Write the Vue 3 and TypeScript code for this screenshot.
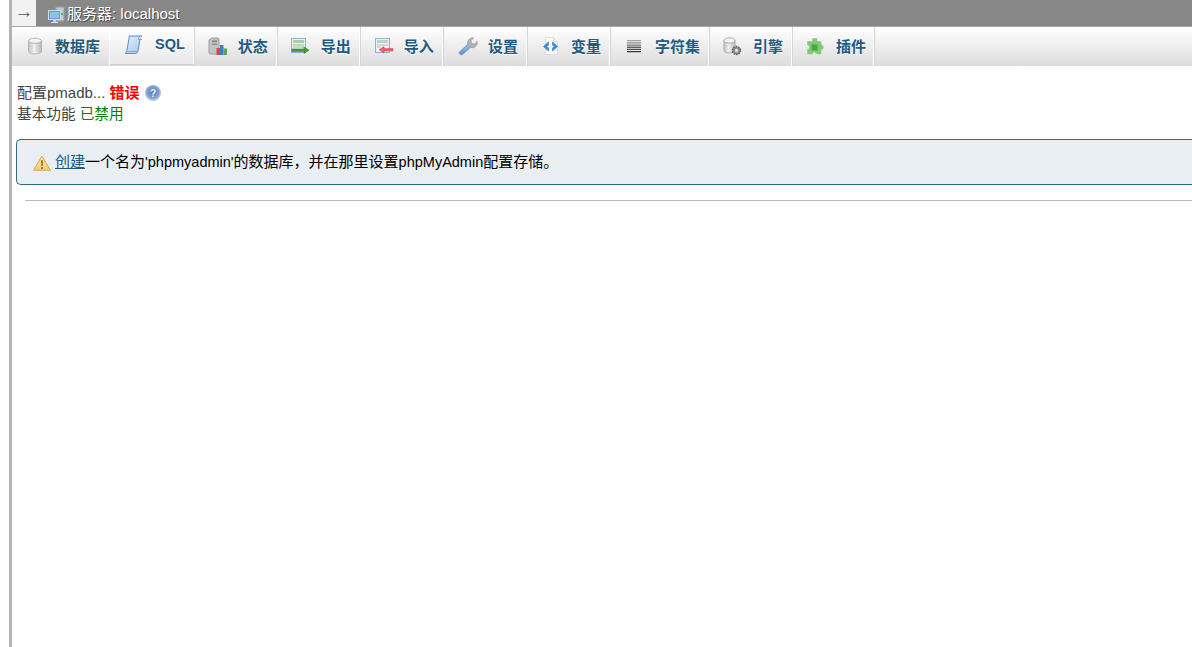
<script setup lang="ts">
const tabs = [
  { label: '数据库', icon: 'db' },
  { label: 'SQL', icon: 'sql' },
  { label: '状态', icon: 'status' },
  { label: '导出', icon: 'export' },
  { label: '导入', icon: 'import' },
  { label: '设置', icon: 'wrench' },
  { label: '变量', icon: 'vars' },
  { label: '字符集', icon: 'charset' },
  { label: '引擎', icon: 'engine' },
  { label: '插件', icon: 'plugin' },
];
</script>

<template>
  <div class="page">
    <svg class="defs" width="0" height="0">
      <defs>
        <linearGradient id="cyl" x1="0" x2="1" y1="0" y2="0">
          <stop offset="0" stop-color="#c4c4c2" />
          <stop offset=".45" stop-color="#f0f0ee" />
          <stop offset="1" stop-color="#b6b6b4" />
        </linearGradient>
        <linearGradient id="scroll" x1="0" x2="1" y1="0" y2="1">
          <stop offset="0" stop-color="#e6f0fb" />
          <stop offset="1" stop-color="#a3c4ea" />
        </linearGradient>
        <linearGradient id="blue" x1="0" x2="0" y1="0" y2="1">
          <stop offset="0" stop-color="#a6c3e6" />
          <stop offset="1" stop-color="#5f8fd0" />
        </linearGradient>
        <linearGradient id="lines" gradientUnits="userSpaceOnUse" x1="0" x2="0" y1="3" y2="15">
          <stop offset="0" stop-color="#a8a8a8" />
          <stop offset="1" stop-color="#333" />
        </linearGradient>
        <linearGradient id="warnfill" x1="0" x2="0" y1="0" y2="1">
          <stop offset="0" stop-color="#fdf0b8" />
          <stop offset="1" stop-color="#f5c964" />
        </linearGradient>
        <radialGradient id="helpfill" cx=".5" cy=".45" r=".55">
          <stop offset="0" stop-color="#4f7cb8" />
          <stop offset=".65" stop-color="#7da2d0" />
          <stop offset="1" stop-color="#c6d5e8" />
        </radialGradient>
      </defs>
    </svg>

    <div class="serverbar">
      <span class="toggle">→</span>
      <svg class="srv-icon" width="18" height="18" viewBox="0 0 18 18">
        <rect x="8" y="1" width="8" height="14" fill="#c6c9cc" stroke="#9a9ea2" />
        <rect x="13" y="7" width="2" height="2" fill="#58b058" />
        <rect x=".5" y="4.500" width="12" height="9" fill="#5da0dc" stroke="#cfd6dc" />
        <rect x="2" y="6" width="9" height="6" fill="#8cc0ea" />
        <rect x="5" y="14" width="3" height="2" fill="#c9cdd1" />
        <rect x="3" y="16" width="7" height="1" fill="#dfe2e4" />
      </svg>
      <span class="srv-text">服务器: localhost</span>
    </div>

    <nav class="tabs">
      <a v-for="t in tabs" :key="t.label" class="tab" :class="{ active: t.icon === 'sql' }">
        <svg class="ic" width="20" height="20" viewBox="0 0 20 20">
          <template v-if="t.icon === 'db'">
            <path d="M3.500 3.500v11c0 1.400 2.900 2.500 6.500 2.500s6.500-1.100 6.500-2.500v-11z" fill="url(#cyl)" stroke="#b4b4b2" />
            <ellipse cx="10" cy="3.800" rx="6.500" ry="2.500" fill="#f4f4f2" stroke="#b4b4b2" />
          </template>
          <template v-else-if="t.icon === 'sql'">
            <path d="M5 1h13c-1.500.6-1.700 2-2 3.500l-2 11c-.3 1.600-1 3-2.500 3H1c1.300-.5 1.600-1.500 1.900-3L4.900 4c.2-1 .3-2 .1-3z" fill="url(#scroll)" stroke="#5b8dc6" />
            <path d="M16.500 1c-1.500.5-2 2-1.800 3.500H18" fill="#cfe0f3" stroke="#5b8dc6" stroke-width=".7" />
            <path d="M13.500 16.500H3" stroke="#5b8dc6" stroke-width=".6" fill="none" />
          </template>
          <template v-else-if="t.icon === 'status'">
            <path d="M1 3l3-2h6l1 1v15H3c-1 0-2-.5-2-1.500z" fill="#c4c4c4" stroke="#9a9a9a" />
            <rect x="4" y="3.500" width="5" height="1.500" fill="#7e7e7e" />
            <rect x="4" y="6.500" width="5" height="1.500" fill="#8e8e8e" />
            <rect x="8.500" y="11" width="3.500" height="7" fill="#d8483e" />
            <rect x="12" y="8" width="3.500" height="10" fill="#3f78cc" />
            <rect x="15.500" y="11.500" width="3.500" height="6.500" fill="#4fae4a" />
          </template>
          <template v-else-if="t.icon === 'export'">
            <rect x=".5" y="1.500" width="14" height="14" fill="#e8f0e8" stroke="#8fb0d4" />
            <rect x="2" y="3" width="11" height="3" fill="#a8d0a8" />
            <path d="M2 8h11M2 10h11" stroke="#9cc49c" />
            <path d="M1 12h12v-2l5 3.200-5 3.300v-2H1z" fill="#3f9a3f" stroke="#2f7a2f" stroke-width=".5" />
          </template>
          <template v-else-if="t.icon === 'import'">
            <rect x="1.500" y="1.500" width="14" height="14" fill="#eef0f4" stroke="#8fb0d4" />
            <rect x="3" y="3" width="11" height="3" fill="#bcd8bc" />
            <path d="M3 8h11M3 10h3" stroke="#a8c8a8" />
            <path d="M19 11.500H10v-2l-5 3.200 5 3.300v-2h9z" fill="#ee6264" stroke="#cf4444" stroke-width=".5" />
          </template>
          <template v-else-if="t.icon === 'wrench'">
            <path d="M1.500 15 10 7l3 3-8.500 7.500c-1.500 1.200-4.200-1-3-2.500z" fill="url(#blue)" stroke="#5f8ac0" stroke-width=".7" />
            <path d="M9.700 7.300c-.7-3 1-6 5-6.600l1 .3-2.700 2.700.7 2.700 2.800.7 2.700-2.700c.6 4-2.800 7.300-6.400 6.100z" fill="#b3b3b3" stroke="#8c8c8c" stroke-width=".6" />
          </template>
          <template v-else-if="t.icon === 'vars'">
            <path d="M4.500 .5h8l4 4v13h-12z" fill="#fbfbfb" stroke="#dcdcdc" />
            <path d="M12.500 .5v4h4" fill="#eee" stroke="#dcdcdc" />
            <path d="M7.500 5 2.500 9.500l5 4.500v-3L6 9.500 7.500 8z" fill="#3c8bdc" stroke="#3c8bdc" stroke-width=".8" stroke-linejoin="round" />
            <path d="M11.500 5l5 4.500-5 4.500v-3L13 9.500 11.500 8z" fill="#3c8bdc" stroke="#3c8bdc" stroke-width=".8" stroke-linejoin="round" />
          </template>
          <template v-else-if="t.icon === 'charset'">
            <path d="M2 3h14v1.300H2zM2 5.200h14v1.300H2zM2 7.400h14v1.300H2zM2 9.600h14v1.300H2zM2 11.800h14v1.300H2zM2 14h14v1.300H2z" fill="url(#lines)" />
          </template>
          <template v-else-if="t.icon === 'engine'">
            <path d="M1 3.500v10c0 1.300 2.500 2.500 5.500 2.500s5.500-1.200 5.500-2.500v-10z" fill="url(#cyl)" stroke="#aaa" />
            <ellipse cx="6.500" cy="3.500" rx="5.500" ry="2.700" fill="#f4f4f4" stroke="#aaa" />
            <circle cx="13.500" cy="13.500" r="4" fill="#8a8a8a" stroke="#666" stroke-width="1.500" stroke-dasharray="1.500 1" />
            <circle cx="13.500" cy="13.500" r="1.700" fill="#e4e4e4" />
          </template>
          <template v-else>
            <path d="M6.500 1.500h4.500v3h4v3.500c3-.8 3 5.500 0 4.500v4.500h-4.500c.5-2.200-4.500-2.200-4 0H1.500v-4.500c2.500.4 2.500-5 0-4.500V4.500h5z" fill="#83c878" stroke="#93d086" stroke-width=".7" />
            <rect x="5.500" y="7.500" width="6" height="6" fill="#46a846" />
          </template>
        </svg>
        <span class="tab-text">{{ t.label }}</span>
      </a>
    </nav>

    <div class="content">
      <div class="status-line">配置pmadb... <strong class="err">错误</strong>
        <svg class="help" width="16" height="16" viewBox="0 0 16 16">
          <circle cx="8" cy="8" r="8" fill="url(#helpfill)" />
          <text x="8" y="12" text-anchor="middle" font-size="10" font-weight="700" fill="#e8eef6" font-family="Liberation Sans">?</text>
        </svg>
      </div>
      <div class="status-line second">基本功能 <span class="off">已禁用</span></div>

      <div class="notice">
        <svg class="warn" width="18" height="16" viewBox="0 0 18 16">
          <path d="M9 1 17.500 15.300H.5z" fill="url(#warnfill)" stroke="#dca858" stroke-linejoin="round" />
          <path d="M7.800 5.200h2.400L9.700 11H8.300z" fill="#a87b2c" />
          <rect x="8" y="12" width="2" height="2" fill="#a87b2c" />
        </svg>
        <span><a class="link">创建</a>一个名为<span class="latin">'phpmyadmin'</span>的数据库，并在那里设置<span class="latin">phpMyAdmin</span>配置存储。</span>
      </div>

      <hr class="rule" />
    </div>
  </div>
</template>

<style>
html, body { margin: 0; background: #fff; overflow: hidden; }
</style>

<style scoped>
.page {
  height: 647px;
  margin-left: 9px;
  border-left: 3px solid #b4b4b4;
  font-family: "Liberation Sans", "Noto Sans CJK SC", sans-serif;
  font-size: 15px;
  color: #444;
  overflow: hidden;
}
.defs { display: block; height: 0; }
.serverbar {
  height: 26px;
  background: #888;
  border-bottom: 1px solid #a6a6a6;
  display: flex;
  align-items: center;
  color: #fff;
}
.toggle {
  width: 24px;
  height: 26px;
  background: #f2f2f2;
  color: #555;
  font-size: 19px;
  text-align: center;
  line-height: 24px;
}
.srv-icon { margin-left: 12px; margin-top: 4px; }
.srv-text { margin: -2px 0 0 1px; text-shadow: 1px 1px 1px #444; }
.tabs {
  height: 39px;
  display: flex;
  background: linear-gradient(#fff, #dcdcdc);
}
.tab {
  display: flex;
  align-items: center;
  padding: 0 8px 0 14px;
  border-right: 1px solid #fff;
  box-shadow: 1px 0 0 #d5d5d5;
  color: #235a81;
  font-weight: 700;
  text-shadow: 0 1px 0 #fff;
}
.tab:first-child { padding: 0 9px 0 13px; }
.tab:nth-child(6), .tab:nth-child(8) { padding-left: 15px; }
.tab:last-child { padding-right: 7px; }
.tab.active {
  height: 36px;
  padding: 0 8px 1px 14px;
  background: linear-gradient(#fff, #e8e8e8);
  border-bottom: 1px solid #ccc;
  font-size: 14.5px;
}
.ic { margin-right: 10px; flex: none; }
.active .ic { margin-right: 11px; }
.tab-text { margin-top: -2px; }
.content { padding: 16px 0 0 5px; }
.status-line { line-height: 21px; display: flex; align-items: center; white-space: pre; }
.second { font-size: 14.667px; margin-top: 1px; }
.err { color: #f00; }
.off { color: #008000; }
.help { margin-left: 5px; }
.notice {
  margin: 14px 0 0 -1px;
  height: 41px;
  padding: 0 0 3px 16px;
  background: #e8eef1;
  border: 1px solid #2f6a7d;
  border-right: 0;
  border-radius: 5px 0 0 5px;
  display: flex;
  align-items: center;
  color: #000;
}
.latin { font-size: 14.5px; }
.warn { margin-right: 4px; margin-top: 5px; }
.link { color: #235a81; text-decoration: underline; }
.rule {
  margin: 15px 0 0 8px;
  border: 0;
  border-top: 1px solid #bbb;
}
</style>
